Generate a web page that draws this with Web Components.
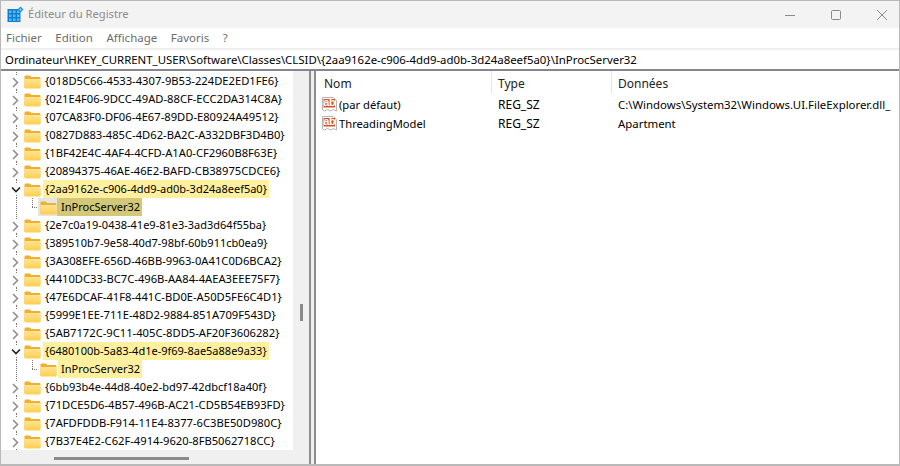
<!DOCTYPE html>
<html lang="fr">
<head>
<meta charset="utf-8">
<title>Éditeur du Registre</title>
<style>
  html, body { margin: 0; height: 100%; background: #fff; }
  body { font: 11px "Noto Sans", "Liberation Sans", sans-serif; color: #000; overflow: hidden; }
</style>
</head>
<body>
<reg-window>
  <reg-titlebar slot="title">Éditeur du Registre</reg-titlebar>
  <reg-menu slot="menu"></reg-menu>
  <reg-address slot="address">Ordinateur\HKEY_CURRENT_USER\Software\Classes\CLSID\{2aa9162e-c906-4dd9-ad0b-3d24a8eef5a0}\InProcServer32</reg-address>
  <reg-tree slot="tree"></reg-tree>
  <reg-list slot="list"></reg-list>
</reg-window>

<script>
const FOLDER_SVG = `<svg width="17" height="15" viewBox="0 0 17 15">
  <defs><linearGradient id="fg" x1="0" y1="0" x2="0" y2="1"><stop offset="0" stop-color="#ffe493"/><stop offset="1" stop-color="#ffcf4d"/></linearGradient></defs>
  <path d="M0.5 2.5a1 1 0 0 1 1-1h4.2l1.6 1.6h8a1 1 0 0 1 1 1v9a1 1 0 0 1-1 1h-13.8a1 1 0 0 1-1-1z" fill="#efb030"/>
  <path d="M0.5 5h16v8.5a1 1 0 0 1-1 1h-14a1 1 0 0 1-1-1z" fill="url(#fg)"/>
</svg>`;

class RegWindow extends HTMLElement {
    constructor() {
        super();
        this.attachShadow({mode: 'open'});
        this.shadowRoot.innerHTML = `
            <style>
                :host { display: flex; flex-direction: column; width: 900px; height: 466px; box-sizing: border-box; border: 1px solid #b9b9b9; border-width: 1px 1px 2px 1px; background: #fff; }
                .panes { flex: 1; display: flex; min-height: 0; border-top: 2px solid #828790; }
                .left { width: 308px; flex: none; border-right: 2px solid #8f8f8f; }
                .gap { width: 3px; flex: none; background: #f0f0f0; }
                .right { flex: 1; min-width: 0; border-left: 2px solid #8f8f8f; }
            </style>
            <slot name="title"></slot>
            <slot name="menu"></slot>
            <slot name="address"></slot>
            <div class="panes">
                <div class="left"><slot name="tree"></slot></div>
                <div class="gap"></div>
                <div class="right"><slot name="list"></slot></div>
            </div>`;
    }
}

class RegTitlebar extends HTMLElement {
    constructor() {
        super();
        this.attachShadow({mode: 'open'});
        this.shadowRoot.innerHTML = `
            <style>
                :host { display: flex; align-items: center; height: 27px; background: #f3f3f3; color: #8c8c8c; padding-left: 6px; overflow: hidden; font-size: 11.2px; }
                .icon { margin-right: 4px; display: block; }
                .text { flex: 1; margin-top: -2px; }
                .btns { display: flex; margin-right: -6px; }
                .btn { width: 46px; height: 27px; display: flex; align-items: center; justify-content: center; }
            </style>
            <svg class="icon" width="17" height="17" viewBox="0 0 17 17">
                <path d="M0.5 3h13v13h-13z" fill="#0e7fd0"/>
                <path d="M2 4.5h2.5v2.5H2zM6 4.5h2.5v2.5H6zM10 4.5h2.5v2.5H10zM2 8.5h2.5v2.5H2zM6 8.5h2.5v2.5H6zM10 8.5h2.5v2.5H10zM2 12.5h2.5v2.5H2zM6 12.5h2.5v2.5H6zM10 12.5h2.5v2.5H10z" fill="#5cb8f0"/>
                <path d="M13.5 0.5l3 3-3 3-3-3z" fill="#1c8fe0"/>
                <path d="M13.5 2.3l1.2 1.2-1.2 1.2-1.2-1.2z" fill="#a9dcfb"/>
            </svg>
            <span class="text"><slot></slot></span>
            <div class="btns">
                <div class="btn"><svg width="12" height="12"><path d="M1 6.5h10" stroke="#8a8a8a"/></svg></div>
                <div class="btn"><svg width="12" height="12"><rect x="1.5" y="1.5" width="9" height="9" rx="1" fill="none" stroke="#8a8a8a"/></svg></div>
                <div class="btn"><svg width="12" height="12"><path d="M1 1l10 10M11 1L1 11" stroke="#8a8a8a"/></svg></div>
            </div>`;
    }
}

class RegMenu extends HTMLElement {
    constructor() {
        super();
        this.attachShadow({mode: 'open'});
        const items = ['Fichier', 'Edition', 'Affichage', 'Favoris', '?'];
        this.shadowRoot.innerHTML = `
            <style>
                :host { display: flex; align-items: center; height: 20px; box-sizing: border-box; padding: 0 0 2px 5px; gap: 13.5px; background: #fff; color: #6d6d6d; font-size: 11.5px; }
            </style>
            ${items.map(i => `<span>${i}</span>`).join('')}`;
    }
}

class RegAddress extends HTMLElement {
    constructor() {
        super();
        this.attachShadow({mode: 'open'});
        this.shadowRoot.innerHTML = `
            <style>
                :host { display: flex; align-items: center; height: 19px; padding-left: 4px; background: #fff; border-top: 2px solid #f0f0f0; white-space: nowrap; font-size: 11.4px; }
            </style>
            <slot></slot>`;
    }
}

class TreeNode extends HTMLElement {
    static get observedAttributes() { return ['label', 'state']; }
    constructor() {
        super();
        this.attachShadow({mode: 'open'});
    }
    connectedCallback() { this.render(); }
    attributeChangedCallback() { this.render(); }
    render() {
        const label = this.getAttribute('label') || '';
        const state = this.getAttribute('state') || 'closed'; // closed, open, child
        const dots = (x, y1, y2) => {
            let s = '';
            for (let y = y1; y < y2; y += 2) s += `<rect x="${x}" y="${y}" width="1" height="1" fill="#777"/>`;
            return s;
        };
        let gutter;
        if (state === 'child') {
            let h = '';
            for (let x = 31; x < 37; x += 2) h += `<rect x="${x}" y="9" width="1" height="1" fill="#777"/>`;
            gutter = `<svg class="gutter" width="37" height="18">${dots(15, 0, 18)}${dots(31, 0, 9)}${h}</svg>`;
        } else if (state === 'open') {
            gutter = `<svg class="gutter" width="23" height="18">${dots(15, 0, 4)}${dots(15, 15, 18)}<path d="M11 7.5l4 4 4-4" fill="none" stroke="#222" stroke-width="1.6"/></svg>`;
        } else {
            gutter = `<svg class="gutter" width="23" height="18">${dots(15, 0, 3)}${dots(15, 17, 18)}<path d="M12 6l4.5 4.5L12 15" fill="none" stroke="#8c8c8c" stroke-width="1.5"/></svg>`;
        }
        // uppercase GUIDs run a little wider than the lowercase ones
        const caps = /[a-z]/.test(label) ? '' : ' caps';
        this.shadowRoot.innerHTML = `
            <style>
                :host { display: flex; align-items: center; height: 18px; white-space: nowrap; }
                .gutter { display: block; flex: none; }
                .folder { display: flex; align-items: center; width: 17px; height: 18px; flex: none; }
                .label { padding: 0 2px; height: 18px; line-height: 18px; margin-left: 2px; }
                .caps { font-size: 11.2px; }
                :host([state="child"]) .folder { width: 19px; justify-content: flex-end; }
                :host([state="child"]) .label { margin-left: 1px; padding: 0 2px 0 3px; }
                :host([mark="hi"]) .label { background: #fff0a0; }
                :host([mark="sel"]) .label { background: #d2c877; margin-left: 0; padding: 0 2px 0 4px; }
                :host([mark="sel"]) .folder { background: #e5e5e5; }
            </style>
            ${gutter}
            <div class="folder">${FOLDER_SVG}</div>
            <span class="label${caps}">${label}</span>`;
    }
}

class RegTree extends HTMLElement {
    constructor() {
        super();
        this.attachShadow({mode: 'open'});
        const nodes = [
            ['{018D5C66-4533-4307-9B53-224DE2ED1FE6}'],
            ['{021E4F06-9DCC-49AD-88CF-ECC2DA314C8A}'],
            ['{07CA83F0-DF06-4E67-89DD-E80924A49512}'],
            ['{0827D883-485C-4D62-BA2C-A332DBF3D4B0}'],
            ['{1BF42E4C-4AF4-4CFD-A1A0-CF2960B8F63E}'],
            ['{20894375-46AE-46E2-BAFD-CB38975CDCE6}'],
            ['{2aa9162e-c906-4dd9-ad0b-3d24a8eef5a0}', 'open', 'hi'],
            ['InProcServer32', 'child', 'sel'],
            ['{2e7c0a19-0438-41e9-81e3-3ad3d64f55ba}'],
            ['{389510b7-9e58-40d7-98bf-60b911cb0ea9}'],
            ['{3A308EFE-656D-46BB-9963-0A41C0D6BCA2}'],
            ['{4410DC33-BC7C-496B-AA84-4AEA3EEE75F7}'],
            ['{47E6DCAF-41F8-441C-BD0E-A50D5FE6C4D1}'],
            ['{5999E1EE-711E-48D2-9884-851A709F543D}'],
            ['{5AB7172C-9C11-405C-8DD5-AF20F3606282}'],
            ['{6480100b-5a83-4d1e-9f69-8ae5a88e9a33}', 'open', 'hi'],
            ['InProcServer32', 'child', 'hi'],
            ['{6bb93b4e-44d8-40e2-bd97-42dbcf18a40f}'],
            ['{71DCE5D6-4B57-496B-AC21-CD5B54EB93FD}'],
            ['{7AFDFDDB-F914-11E4-8377-6C3BE50D980C}'],
            ['{7B37E4E2-C62F-4914-9620-8FB5062718CC}'],
        ];
        this.shadowRoot.innerHTML = `
            <style>
                :host { display: grid; grid-template-columns: 292px 16px; grid-template-rows: 379px 14px; height: 393px; background: #f0f0f0; }
                .rows { background: #fff; overflow: hidden; padding-top: 1px; }
                .vbar { display: flex; flex-direction: column; justify-content: flex-end; align-items: center; padding-bottom: 129px; height: 379px; box-sizing: border-box; }
                .vthumb { width: 3px; height: 17px; background: #8a8a8a; }
                .hbar { padding: 7px 0 0 53px; }
                .hthumb { width: 135px; height: 3px; background: #8a8a8a; }
            </style>
            <div class="rows">
                ${nodes.map(n => `<tree-node label="${n[0]}" state="${n[1] || 'closed'}"${n[2] ? ` mark="${n[2]}"` : ''}></tree-node>`).join('')}
            </div>
            <div class="vbar"><div class="vthumb"></div></div>
            <div class="hbar"><div class="hthumb"></div></div>`;
    }
}

class RegList extends HTMLElement {
    constructor() {
        super();
        this.attachShadow({mode: 'open'});
        const ab = `<svg class="ab" width="17" height="17" viewBox="0 0 17 17">
            <path d="M1.5 1.5h11l3 3v10.5l-3-1.5-3 1.5-3-1.5-3 1.5-2-1z" fill="#fff" stroke="#b5b5b5"/>
            <path d="M2.5 3h11.5v8.5H2.5z" fill="#d9502e"/>
            <text x="8.2" y="10.3" text-anchor="middle" font-family="'Liberation Sans', sans-serif" font-weight="700" font-size="11" letter-spacing="-0.4" fill="#fff">ab</text>
        </svg>`;
        const rows = [
            ['(par défaut)', 'REG_SZ', 'C:\\Windows\\System32\\Windows.UI.FileExplorer.dll_'],
            ['ThreadingModel', 'REG_SZ', 'Apartment'],
        ];
        this.shadowRoot.innerHTML = `
            <style>
                :host { display: block; height: 393px; overflow: hidden; }
                .head, .row { display: grid; grid-template-columns: 176px 120px 1fr; white-space: nowrap; }
                .head { height: 23px; color: #222; margin-bottom: 1px; font-size: 12px; }
                .head span { padding-left: 6px; height: 23px; line-height: 25px; border-right: 1px solid #e5e5e5; }
                .head span:first-child { padding-left: 8px; }
                .head span:last-child { border-right: 0; }
                .row { height: 19px; align-items: center; }
                .name { display: flex; align-items: center; padding-left: 5px; gap: 1px; font-size: 11.2px; }
                .ab { display: block; flex: none; }
                .cell { padding-left: 6px; font-size: 11.4px; }
                .type { font-size: 12px; }
            </style>
            <div class="head"><span>Nom</span><span>Type</span><span>Données</span></div>
            ${rows.map(r => `<div class="row"><div class="name">${ab}<span>${r[0]}</span></div><div class="cell type">${r[1]}</div><div class="cell">${r[2]}</div></div>`).join('')}`;
    }
}

customElements.define('reg-window', RegWindow);
customElements.define('reg-titlebar', RegTitlebar);
customElements.define('reg-menu', RegMenu);
customElements.define('reg-address', RegAddress);
customElements.define('tree-node', TreeNode);
customElements.define('reg-tree', RegTree);
customElements.define('reg-list', RegList);
</script>
</body>
</html>
